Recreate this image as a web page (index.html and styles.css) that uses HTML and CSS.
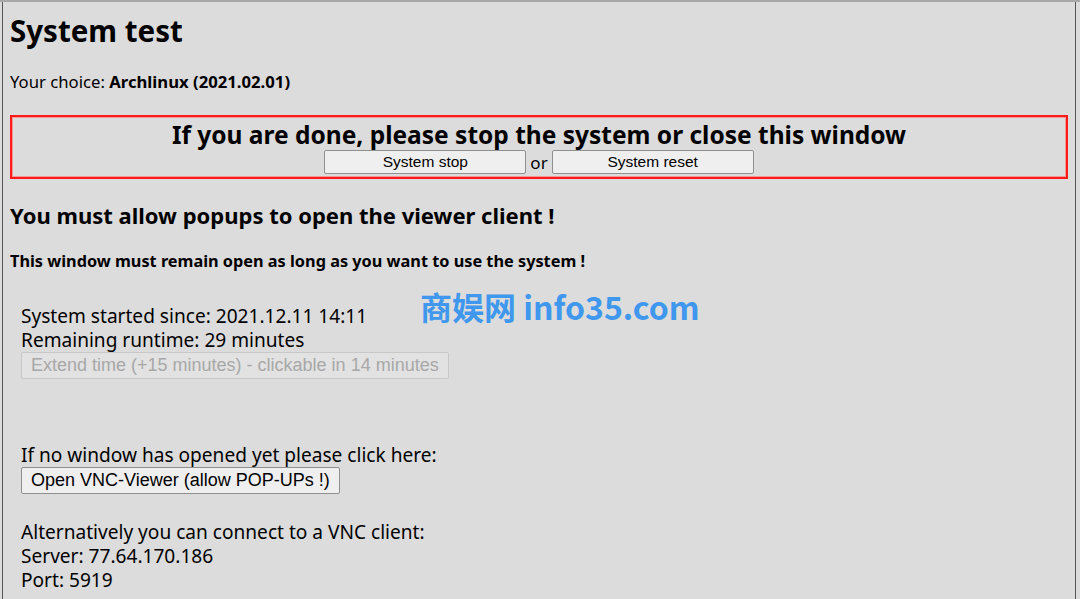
FILE: index.html
```html
<!DOCTYPE html>
<html lang="en">
<head>
  <meta charset="UTF-8">
  <title>System test</title>
  <link rel="stylesheet" href="styles.css">
</head>
<body>
  <div class="window">
    <span class="tick tick-left"></span>
    <span class="tick tick-right"></span>

    <h1>System test</h1>
    <p class="choice">Your choice: <b>Archlinux (2021.02.01)</b></p>

    <!-- Stop box -->
    <div class="stop-box">
      <h2>If you are done, please stop the system or close this window</h2>
      <div class="stop-actions">
        <button class="btn btn-wide">System stop</button>
        <span>or</span>
        <button class="btn btn-wide">System reset</button>
      </div>
    </div>

    <h3>You must allow popups to open the viewer client !</h3>
    <h4>This window must remain open as long as you want to use the system !</h4>

    <div class="info">
      <div class="runtime">
        <div>System started since: 2021.12.11 14:11</div>
        <div>Remaining runtime: 29 minutes</div>
        <button class="btn btn-big" disabled>Extend time (+15 minutes) - clickable in 14 minutes</button>
      </div>

      <div class="viewer">
        <div>If no window has opened yet please click here:</div>
        <button class="btn btn-big">Open VNC-Viewer (allow POP-UPs !)</button>
      </div>

      <div class="vnc">
        <div>Alternatively you can connect to a VNC client:</div>
        <div>Server: 77.64.170.186</div>
        <div>Port: 5919</div>
      </div>
    </div>

    <div class="watermark">商娱网 info35.com</div>
  </div>
</body>
</html>
```

FILE: styles.css
```css
html {
  background-color: #dcdcdc;
}
body {
  margin: 0;
  font-family: "Noto Sans", "Open Sans", sans-serif;
  color: #000;
  background-color: #dcdcdc;
  border-top: 2px solid #a8a8a8;
}

.window {
  position: relative;
  margin-left: 2px;
  width: 1074px;
  height: 597px;
  box-sizing: border-box;
  border-left: 1px solid #555;
  border-right: 1px solid #555;
  padding: 0 7px;
  overflow: hidden;
}
.tick {
  position: absolute;
  top: 23px;
  width: 3px;
  height: 1px;
  background: #333;
}
.tick-left {
  left: -3px;
}
.tick-right {
  right: -4px;
}

h1 {
  font-size: 29.5px;
  font-weight: bold;
  margin: 11px 0 0 0;
  line-height: 36px;
}
.choice {
  font-size: 16.7px;
  margin: 22px 0 0 0;
  line-height: 22px;
}

/* Stop box */
.stop-box {
  margin-top: 22px;
  box-sizing: border-box;
  height: 64px;
  border: 2px solid #ff1a1a;
  box-shadow: inset 0 0 0 1px #f29a9a;
  text-align: center;
  padding-top: 3px;
}
.stop-box h2 {
  font-size: 24.5px;
  margin: 0;
  line-height: 30px;
}
.stop-actions {
  display: flex;
  justify-content: center;
  align-items: center;
  gap: 4px;
  font-size: 17px;
}

.btn {
  font-family: "Liberation Sans", Arial, sans-serif;
  background-color: #efefef;
  border: 1px solid #8f8f8f;
  border-radius: 2px;
  color: #000;
  padding: 0;
}
.btn-wide {
  width: 202px;
  height: 24px;
  font-size: 15.5px;
}
.btn-big {
  font-size: 18px;
  height: 27px;
  padding: 0 9px;
}
.btn[disabled] {
  color: #a8a8a8;
  border-color: #c8c8c8;
  background-color: #e2e2e2;
}

h3 {
  font-size: 22px;
  margin: 22px 0 0 0;
  line-height: 28px;
}
h4 {
  font-size: 16.3px;
  margin: 21px 0 0 0;
  line-height: 22px;
}

/* Info block */
.info {
  padding-left: 11px;
  font-size: 19.1px;
  line-height: 24px;
}
.runtime {
  margin-top: 32px;
}
.runtime .btn {
  display: block;
}
.viewer {
  margin-top: 64px;
}
.viewer .btn {
  display: block;
}
.vnc {
  margin-top: 26px;
}

.watermark {
  position: absolute;
  left: 417px;
  top: 288px;
  font-family: "Noto Sans CJK SC", sans-serif;
  font-size: 32px;
  line-height: 32px;
  font-weight: bold;
  color: #3f97ee;
}
```
